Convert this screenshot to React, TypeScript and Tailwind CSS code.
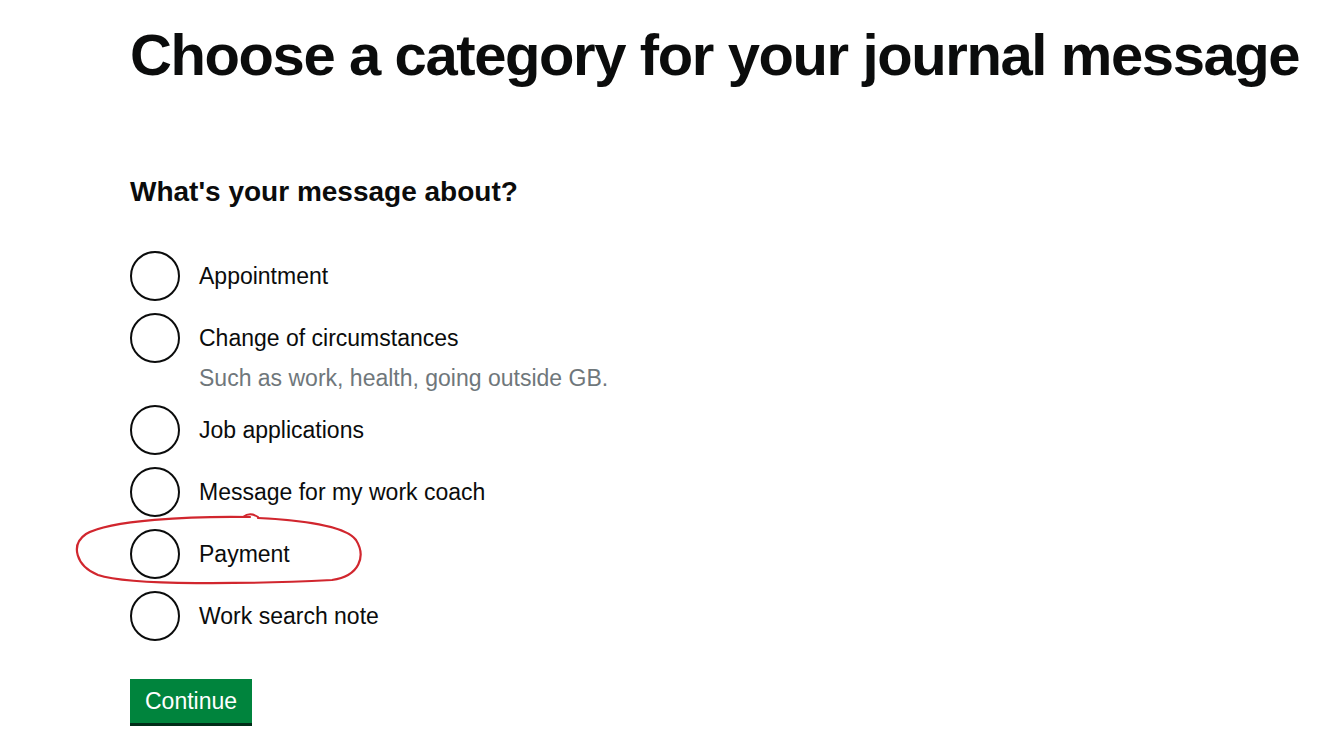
import React from 'react';

const OPTIONS = [
  { label: 'Appointment' },
  { label: 'Change of circumstances', hint: 'Such as work, health, going outside GB.' },
  { label: 'Job applications' },
  { label: 'Message for my work coach' },
  { label: 'Payment' },
  { label: 'Work search note' },
];

const FONT = "font-['Liberation_Sans',Arial,sans-serif]";

function Radio({ label, hint }: { label: string; hint?: string }) {
  return (
    <div className="flex items-start mb-[12px]">
      <span className="block h-[50px] w-[50px] shrink-0 rounded-full border-2 border-[#0b0c0c] bg-white" />
      <div className="pl-[19px] pt-[10px]">
        <div className="text-[23px] leading-[30px] text-[#0b0c0c]">{label}</div>
        {hint && <div className="mt-[10px] text-[23px] leading-[30px] text-[#6f777b]">{hint}</div>}
      </div>
    </div>
  );
}

export default function App() {
  return (
    <div className={`relative min-h-[746px] w-full bg-white ${FONT}`}>
      <div className="pl-[130px] pt-[17px]">
        <h1 className="text-[58px] font-bold leading-[75px] tracking-[-1.4px] text-[#0b0c0c]">
          Choose a category for your journal message
        </h1>

        <fieldset className="mt-[82px]">
          <legend className="mb-[41px] text-[28px] font-bold leading-[36px] text-[#0b0c0c]">
            What's your message about?
          </legend>
          <div className="flex flex-col">
            {OPTIONS.map((o) => (
              <Radio key={o.label} label={o.label} hint={o.hint} />
            ))}
          </div>
        </fieldset>

        <button
          type="button"
          className="mt-[26px] h-[44px] bg-[#00843d] px-[15px] text-[23px] leading-[44px] text-white shadow-[0_3px_0_#002d18]"
        >
          Continue
        </button>
      </div>

      {/* red hand-drawn annotation */}
      <svg className="pointer-events-none absolute left-0 top-0" width="1338" height="746">
        <path
          d="M 250 517 C 190 516, 110 520, 86 534 C 70 545, 76 566, 98 575 C 130 586, 250 584, 332 580 C 360 576, 366 556, 356 540 C 346 526, 300 520, 258 518"
          fill="none"
          stroke="#d1262e"
          strokeWidth="2.2"
          strokeLinecap="round"
        />
        <path d="M 243 517 C 247 514, 252 513, 258 517" fill="none" stroke="#d1262e" strokeWidth="2" strokeLinecap="round" />
      </svg>
    </div>
  );
}
